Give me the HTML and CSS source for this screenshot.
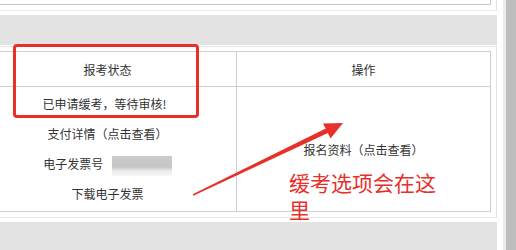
FILE: index.html
```html
<!DOCTYPE html>
<html lang="zh-CN">
<head>
    <meta charset="UTF-8">
    <meta name="viewport" content="width=device-width, initial-scale=1.0">
    <title>报考状态</title>
    <link rel="stylesheet" href="styles.css">
</head>
<body>
    <div class="page">
        <div class="main">
            <div class="panel panel-prev">
                <div class="prev-table"></div>
            </div>
            <div class="band"></div>
            <div class="panel">
                <table class="status-table">
                    <colgroup>
                        <col class="col-status">
                        <col>
                    </colgroup>
                    <thead>
                        <tr>
                            <th>报考状态</th>
                            <th>操作</th>
                        </tr>
                    </thead>
                    <tbody>
                        <tr>
                            <td>
                                <div class="line line-status">已申请缓考，等待审核!</div>
                                <div class="line"><a href="#">支付详情（点击查看）</a></div>
                                <div class="line">电子发票号 <span class="masked"></span></div>
                                <div class="line"><a href="#">下载电子发票</a></div>
                            </td>
                            <td><a href="#">报名资料（点击查看）</a></td>
                        </tr>
                    </tbody>
                </table>
            </div>
            <div class="band"></div>
        </div>
        <div class="scrollbar"><div class="thumb"></div></div>

        <!-- annotation layer -->
        <div class="mark-box"></div>
        <svg class="mark-arrow" width="516" height="250" viewBox="0 0 516 250">
            <polygon points="343,123 323,123.5 325.7,128.6 192.7,194.3 193.3,195.8 327.9,133.1 330.5,138.5" fill="#e8302b"/>
        </svg>
        <div class="mark-note">缓考选项会在这里</div>
    </div>
</body>
</html>
```

FILE: styles.css
```css
/* Basic styling */
body {
    margin: 0;
    font-family: "Noto Sans CJK SC", "Microsoft YaHei", sans-serif;
    font-size: 12px;
    color: #333;
    background: #fff;
}
a {
    color: #333;
    text-decoration: none;
}
.page {
    position: relative;
    display: flex;
    width: 516px;
    height: 250px;
    overflow: hidden;
}
.main {
    width: 497px;
    overflow: hidden;
}
.panel {
    margin-left: -28px;
    padding: 4px 5px 5px;
    border: 1px solid #e8e8e8;
    border-right-color: #e4e4e4;
}
.panel-prev {
    border-top: none;
    padding-top: 0;
}
.prev-table {
    height: 4px;
    border-right: 1px solid #c8c8c8;
    border-bottom: 1px solid #c8c8c8;
}
.band {
    height: 30px;
    margin: 3px 0 1px;
    background: #e3e3e3;
}
.panel + .band {
    margin-top: 4px;
}
.status-table {
    width: 513px;
    table-layout: fixed;
    border-collapse: collapse;
}
.col-status {
    width: 258px;
}
.status-table th,
.status-table td {
    border: 1px solid #cfcfcf;
    padding: 0;
    text-align: center;
    font-weight: normal;
}
.status-table th {
    height: 34px;
}
.status-table td {
    height: 124px;
    vertical-align: middle;
}
.line {
    line-height: 30px;
}
.line-status {
    padding-right: 6px;
}
.masked {
    display: inline-block;
    width: 60px;
    height: 20px;
    margin-left: 6px;
    vertical-align: middle;
    background: linear-gradient(to bottom, #cbcbcb 0%, #c6c6c6 55%, #ececec 75%, #f7f7f7 100%);
}
.scrollbar {
    margin-left: auto;
    width: 13px;
    padding-left: 3px;
    box-sizing: border-box;
    background: #ececec;
}
.thumb {
    height: 100%;
    background: #bebebe;
}
.mark-box {
    position: absolute;
    left: 13px;
    top: 44px;
    width: 180px;
    height: 68px;
    border: 3px solid #e8302b;
    border-radius: 4px;
}
.mark-arrow {
    position: absolute;
    left: 0;
    top: 0;
}
.mark-note {
    position: absolute;
    left: 289px;
    top: 169px;
    width: 150px;
    font-size: 21px;
    line-height: 27px;
    color: #e8302b;
}
```
